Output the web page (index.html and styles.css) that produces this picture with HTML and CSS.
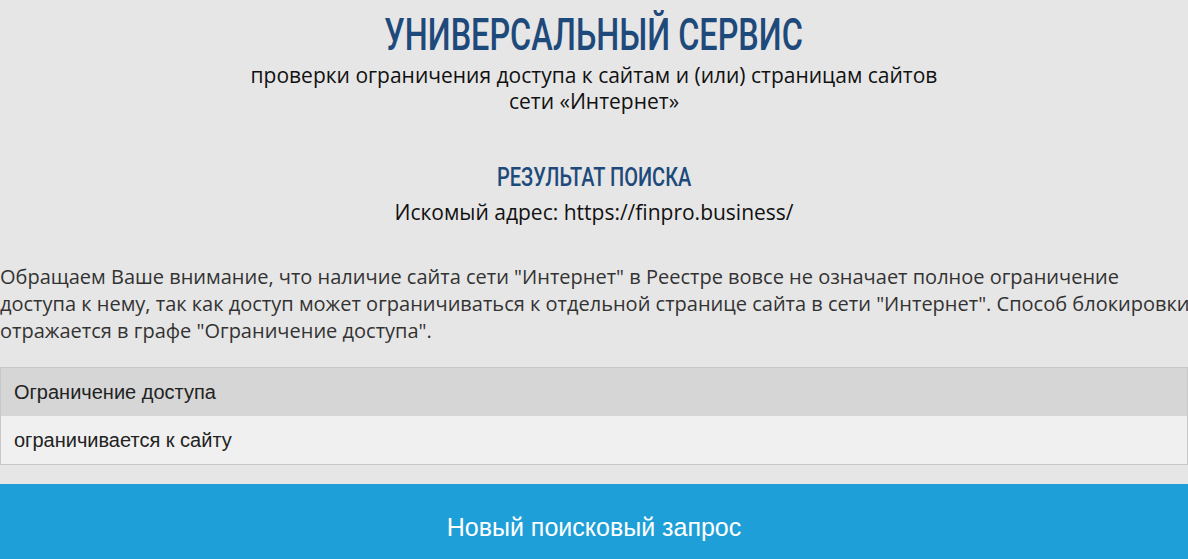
FILE: index.html
```html
<!DOCTYPE html>
<html lang="ru">
<head>
<meta charset="utf-8">
<link rel="stylesheet" href="styles.css">
</head>
<body>
<div class="page">
  <header class="head">
    <h1 class="title"><span class="cond">УНИВЕРСАЛЬНЫЙ СЕРВИС</span></h1>
    <p class="subtitle">проверки ограничения доступа к сайтам и (или) страницам сайтов<br>сети «Интернет»</p>
  </header>
  <section class="result">
    <h2 class="result-title"><span class="cond wide">РЕЗУЛЬТАТ ПОИСКА</span></h2>
    <p class="address">Искомый адрес: https://finpro.business/</p>
  </section>
  <p class="notice">Обращаем Ваше внимание, что наличие сайта сети "Интернет" в Реестре вовсе не означает полное ограничение доступа к нему, так как доступ может ограничиваться к отдельной странице сайта в сети "Интернет". Способ блокировки отражается в графе "Ограничение доступа".</p>
  <table class="info">
    <thead><tr><th>Ограничение доступа</th></tr></thead>
    <tbody><tr><td>ограничивается к сайту</td></tr></tbody>
  </table>
  <div class="btn-wrap"><button class="btn">Новый поисковый запрос</button></div>
</div>
</body>
</html>
```
FILE: styles.css
```css
html, body { margin: 0; padding: 0; }
body {
  background: #e6e6e6;
  width: 1188px;
  height: 559px;
  overflow: hidden;
  font-family: "Open Sans", "DejaVu Sans", sans-serif;
}
.page { display: flex; flex-direction: column; }
.head { text-align: center; padding-top: 10px; }
.cond {
  display: inline-block;
  transform: scaleX(0.72);
  transform-origin: center;
  white-space: nowrap;
}
.cond.wide { transform: scaleX(0.77); }
.title {
  margin: 0;
  font-family: "Roboto", "DejaVu Sans", sans-serif;
  font-weight: 500;
  font-size: 45px;
  line-height: 50px;
  color: #1e4a7b;
}
.subtitle {
  margin: 2px 0 0;
  font-size: 21px;
  line-height: 26px;
  color: #111;
}
.result { text-align: center; margin-top: 48px; }
.result-title {
  margin: 0;
  font-family: "Roboto", "DejaVu Sans", sans-serif;
  font-weight: 500;
  font-size: 26px;
  line-height: 30px;
  color: #1e4a7b;
}
.address {
  margin: 7px 0 0;
  font-size: 21px;
  line-height: 26px;
  color: #111;
}
.notice {
  margin: 38px -8px 0 0;
  font-size: 20px;
  line-height: 27px;
  color: #333;
}
.info {
  margin-top: 23px;
  width: 1188px;
  border-collapse: collapse;
  border: 1px solid #c8c8c8;
  font-family: "Liberation Sans", Arial, sans-serif;
  font-size: 20px;
  color: #222;
}
.info th, .info td {
  text-align: left;
  font-weight: normal;
  padding: 0 13px;
  height: 48px;
}
.info th { background: #d6d6d6; }
.info td { background: #f0f0f0; }
.btn-wrap { margin-top: 19px; }
.btn {
  display: block;
  width: 100%;
  height: 86px;
  border: 0;
  background: #1f9fd8;
  color: #fff;
  font-family: "Liberation Sans", Arial, sans-serif;
  font-size: 25px;
  padding: 0;
  line-height: 86px;
}
```
